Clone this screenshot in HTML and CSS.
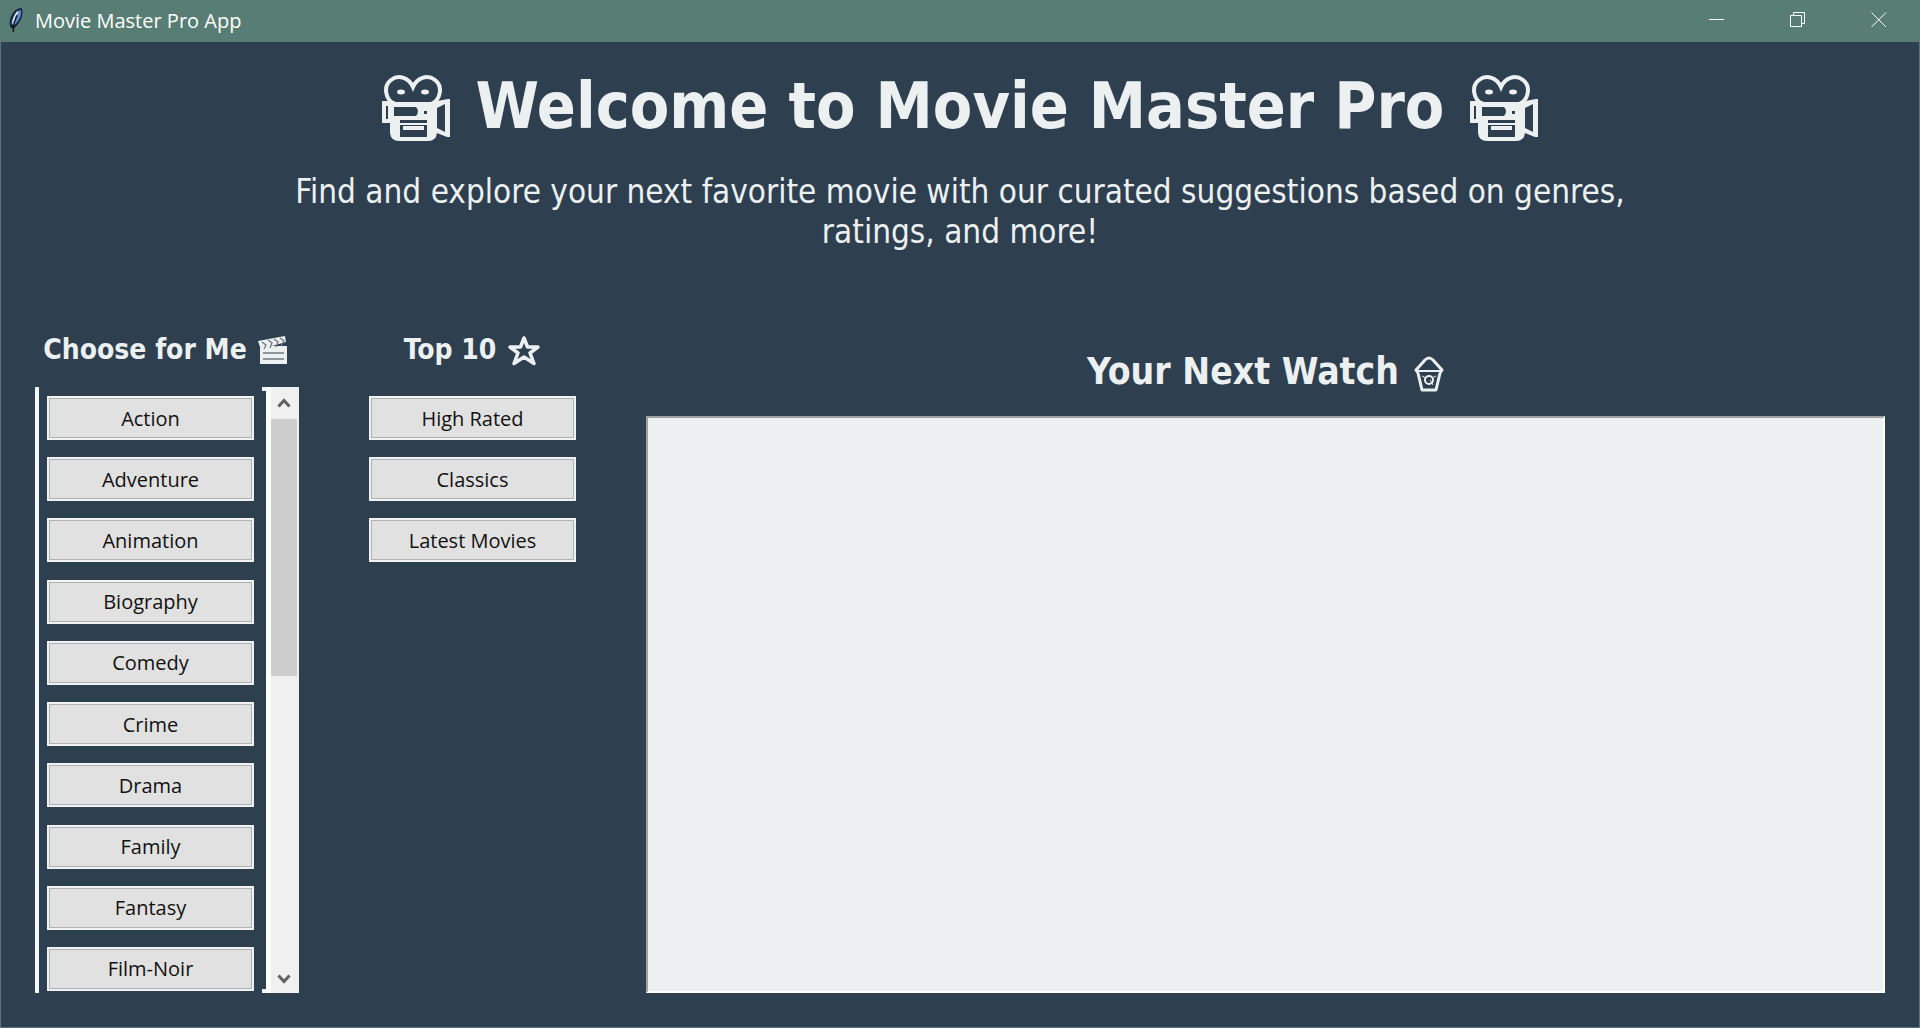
FILE: index.html
```html
<!DOCTYPE html>
<html lang="en">
<head>
<meta charset="utf-8">
<title>Movie Master Pro App</title>
<link rel="stylesheet" href="styles.css">
</head>
<body>
<svg class="symbols" aria-hidden="true">
  <symbol id="camera" viewBox="0 0 68 66">
    <path d="M13 29C3 25 1 11 9 5C17-1 27 3 31 12C35 3 45-1 53 5C61 11 59 25 49 29" fill="none" stroke="currentColor" stroke-width="4"/>
    <path fill="currentColor" d="M0 26H10L14 27H50L66 24H68V62H65L55 58Q54 66 46 66H17Q9 66 8 58V48H0Z"/>
    <path fill="#2e3f50" d="M4 31H6V44H4ZM12 32H34Q38 36 34 41H12ZM42 36H45V39H42ZM55 33L63 29V57L55 53ZM18 45H45V62H18Z"/>
    <path fill="currentColor" d="M17 48H46V50H17ZM21 51H42V55H21Z"/>
    <ellipse cx="19" cy="17" rx="4" ry="2.5" fill="currentColor"/>
    <ellipse cx="43" cy="17" rx="4" ry="2.5" fill="currentColor"/>
  </symbol>
</svg>
<div class="window">
  <header class="titlebar">
    <svg class="feather" viewBox="0 0 16 28" aria-hidden="true">
      <path d="M14 1C7 1 2 8 1 17L2 22L5 24L9 20C13 15 17 7 14 1Z" fill="#17233b"/>
      <path d="M13 3C8 5 4 10 3 18L6 20C11 15 15 9 13 3Z" fill="#5d86c4"/>
      <path d="M10 5C7 9 5 13 5 18" fill="none" stroke="#d4e4f5" stroke-width="2"/>
      <path d="M9 9L6 17L5 27" fill="none" stroke="#10151d" stroke-width="1.5"/>
    </svg>
    <span class="app-name">Movie Master Pro App</span>
    <div class="controls">
      <button type="button" aria-label="Minimize"><svg viewBox="0 0 16 16"><path d="M0 7.500H15"/></svg></button>
      <button type="button" aria-label="Restore"><svg viewBox="0 0 16 16"><path d="M.5 3.500H11.500V14.500H.5ZM3.500 3.500V.5H14.500V11.500H11.500"/></svg></button>
      <button type="button" aria-label="Close"><svg viewBox="0 0 16 16"><path d="M.5.5L15 15M15 .5L.5 15"/></svg></button>
    </div>
  </header>
  <main>
    <section class="intro">
      <h1>
        <svg class="camera" aria-hidden="true"><use href="#camera"/></svg>
        <span>Welcome to Movie Master Pro</span>
        <svg class="camera" aria-hidden="true"><use href="#camera"/></svg>
      </h1>
      <p>Find and explore your next favorite movie with our curated suggestions based on genres,<br>ratings, and more!</p>
    </section>
    <div class="columns">
      <section class="genres">
        <h2>Choose for Me
          <svg class="icon clapper" viewBox="0 0 30 28" aria-hidden="true">
            <path fill="currentColor" d="M0 5L27 0L28 6L14 10H29V28H2V11Z"/>
            <path d="M4 6L8 9L6 13M10 4L14 7L12 12M16 3L20 6L18 11M22 2L26 5L23 10M5 17H26M5 23H26" fill="none" stroke="#6d7881" stroke-width="1.300"/>
          </svg>
        </h2>
        <div class="genre-panel">
          <div class="genre-list">
            <button type="button" class="choice">Action</button>
            <button type="button" class="choice">Adventure</button>
            <button type="button" class="choice">Animation</button>
            <button type="button" class="choice">Biography</button>
            <button type="button" class="choice">Comedy</button>
            <button type="button" class="choice">Crime</button>
            <button type="button" class="choice">Drama</button>
            <button type="button" class="choice">Family</button>
            <button type="button" class="choice">Fantasy</button>
            <button type="button" class="choice">Film-Noir</button>
          </div>
          <div class="scrollbar">
            <button type="button" aria-label="Scroll up"><svg viewBox="0 0 14 12"><path d="M1.500 9.500L7 3.500L12.500 9.500"/></svg></button>
            <div class="track"><div class="thumb"></div></div>
            <button type="button" aria-label="Scroll down"><svg viewBox="0 0 14 12"><path d="M1.500 2.500L7 8.500L12.500 2.500"/></svg></button>
          </div>
        </div>
      </section>
      <section class="top">
        <h2>Top 10
          <svg class="icon star" viewBox="0 0 34 31" aria-hidden="true"><path d="M17 3L20.500 12H31L23 18L27 28.500L17 22L7 28.500L11 18L3 12H13.500Z" fill="none" stroke="currentColor" stroke-width="3.500" stroke-linejoin="round"/></svg>
        </h2>
        <div class="top-list">
          <button type="button" class="choice">High Rated</button>
          <button type="button" class="choice">Classics</button>
          <button type="button" class="choice">Latest Movies</button>
        </div>
      </section>
      <section class="watch">
        <h2><label for="results">Your Next Watch</label>
          <svg class="icon popcorn" viewBox="0 0 30 36" aria-hidden="true">
            <g fill="none" stroke="currentColor" stroke-width="3" stroke-linejoin="round">
              <path d="M4 17L2 14L11 4Q15 0 19 4L28 14L26 17M4 17L8 34H22L26 17"/>
              <path d="M3 15H27" stroke-width="2"/>
              <circle cx="15" cy="24" r="4" stroke-width="2"/>
              <path d="M8 20L12 22M22 20L18 22M16 24L19 29" stroke-width="1"/>
            </g>
          </svg>
        </h2>
        <textarea id="results" readonly></textarea>
      </section>
    </div>
  </main>
</div>
</body>
</html>
```
FILE: styles.css
```css
* { box-sizing: border-box; }
body {
  margin: 0;
  background: #2e3f50;
  color: #ecf0f1;
  font-family: "DejaVu Sans Condensed", "DejaVu Sans", sans-serif;
}
button { font: inherit; padding: 0; border: 0; background: none; color: inherit; }
svg { display: block; flex: none; }
.symbols { position: absolute; width: 0; height: 0; }
.window {
  min-height: 100vh;
  display: flex;
  flex-direction: column;
  border: solid #5c7480;
  border-width: 0 1px 1px;
}
.titlebar {
  height: 42px;
  margin: 0 -1px;
  padding-left: 7px;
  display: flex;
  align-items: center;
  background: #587d74;
  color: #fff;
  font-family: "Open Sans", "Noto Sans", sans-serif;
}
.feather { width: 18px; height: 28px; padding-bottom: 2px; }
.app-name { margin-left: 10px; font-size: 20px; line-height: 28px; }
.controls { margin-left: auto; display: flex; align-self: stretch; padding: 0 1px 2px 0; }
.controls button { width: 81px; display: flex; align-items: center; justify-content: center; }
.controls svg { width: 16px; height: 16px; fill: none; stroke: #fff; }
main { flex: 1; display: flex; flex-direction: column; padding: 18px 34px 34px; }
.intro { text-align: center; }
h1, h2, p { margin: 0; }
h1 {
  display: flex;
  align-items: center;
  justify-content: center;
  gap: 26px;
  font-size: 64px;
  line-height: 92px;
}
.camera { width: 68px; height: 66px; margin-top: 4px; }
p { margin-top: 20px; font-size: 33px; line-height: 40px; }
.columns {
  flex: 1;
  margin-top: 78px;
  display: grid;
  grid-template-columns: 264px 207px 1fr;
  column-gap: 70px;
}
.columns section { display: flex; flex-direction: column; }
h2 {
  display: flex;
  align-items: center;
  justify-content: center;
  gap: 11px;
  font-size: 28px;
  line-height: 40px;
}
.genres h2 { padding-right: 3px; }
.clapper { width: 30px; height: 28px; }
.star { width: 34px; height: 31px; }
.popcorn { width: 30px; height: 36px; margin-top: 4px; }
.genre-panel {
  flex: 1;
  margin-top: 17px;
  display: flex;
  justify-content: space-between;
  border-left: 4px solid #f4f7f8;
}
.genre-list {
  padding: 9px 8px 2px;
  display: flex;
  flex-direction: column;
  justify-content: space-between;
}
.choice {
  width: 207px;
  height: 44px;
  padding-top: 1px;
  border: 2px solid #f0f2f2;
  background: #e1e1e1;
  box-shadow: inset 0 0 0 1px #adb2b2;
  color: #111;
  font-family: "Open Sans", "Noto Sans", sans-serif;
  font-size: 20px;
  line-height: 28px;
}
.scrollbar {
  width: 33px;
  display: flex;
  flex-direction: column;
  padding: 0 2px 0 5px;
  background: linear-gradient(90deg, #fff 5px, #f0f0f0 5px);
  position: relative;
}
.scrollbar::before, .scrollbar::after {
  content: "";
  position: absolute;
  left: -4px;
  width: 4px;
  height: 4px;
  background: #f4f7f8;
}
.scrollbar::before { top: 0; }
.scrollbar::after { bottom: 0; }
.scrollbar button { height: 32px; display: flex; align-items: center; justify-content: center; }
.scrollbar button:last-child { height: 28px; }
.scrollbar svg { width: 14px; height: 12px; fill: none; stroke: #606060; stroke-width: 3; }
.track { flex: 1; }
.thumb { height: 47%; background: #cdcdcd; }
.top-list { margin-top: 26px; display: flex; flex-direction: column; gap: 17px; }
.watch h2 { margin-top: 18px; gap: 15px; font-size: 37px; line-height: 48px; }
textarea {
  flex: 1;
  width: 100%;
  margin-top: 20px;
  display: block;
  resize: none;
  border: 2px solid;
  border-color: #a0a0a0 #fff #fff #a0a0a0;
  background: #ecf0f1;
  outline: none;
}
```
